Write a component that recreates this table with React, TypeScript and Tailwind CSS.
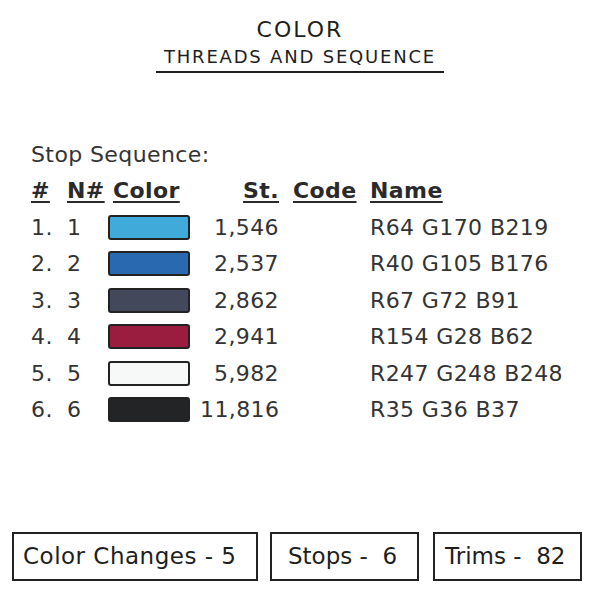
const threads = [
  { n: 1, color: 'bg-[rgb(64,170,219)]', st: '1,546', name: 'R64 G170 B219' },
  { n: 2, color: 'bg-[rgb(40,105,176)]', st: '2,537', name: 'R40 G105 B176' },
  { n: 3, color: 'bg-[rgb(67,72,91)]', st: '2,862', name: 'R67 G72 B91' },
  { n: 4, color: 'bg-[rgb(154,28,62)]', st: '2,941', name: 'R154 G28 B62' },
  { n: 5, color: 'bg-[rgb(247,248,248)]', st: '5,982', name: 'R247 G248 B248' },
  { n: 6, color: 'bg-[rgb(35,36,37)]', st: '11,816', name: 'R35 G36 B37' },
]

const row = 'grid grid-cols-[36px_41px_92px_79px_91px_1fr] items-center h-[36.5px]'

export default function App() {
  return (
    <div className="w-[600px] h-[600px] bg-white relative overflow-hidden">
      <div className="flex flex-col items-center pt-[17px] font-['DejaVu_Sans',sans-serif] text-[#1e1e1e]">
        <h1 className="text-[22px] leading-[26px] tracking-[2px]">COLOR</h1>
        <div className="mt-[3px] px-[8px] border-b-2 border-[#1e1e1e] pb-[3px]">
          <h2 className="text-[18px] leading-[22px] tracking-[1.8px]">THREADS AND SEQUENCE</h2>
        </div>
      </div>

      <div className="mt-[63px] pl-[31px] font-['DejaVu_Sans',sans-serif] text-[22px] tracking-[0.4px] text-[#333]">
        <div className="h-[36.5px] flex items-center">Stop Sequence:</div>
        <div className={`${row} font-bold underline underline-offset-[3px] decoration-[1.5px] text-[#2a2a2a]`}>
          <span>#</span>
          <span>N#</span>
          <span className="pl-[5px]">Color</span>
          <span className="text-right">St.</span>
          <span className="pl-[14px]">Code</span>
          <span>Name</span>
        </div>
        {threads.map((t) => (
          <div key={t.n} className={row}>
            <span>{t.n}.</span>
            <span>{t.n}</span>
            <span className={`w-[82px] h-[25px] border-2 border-[#222] rounded-[3px] ${t.color}`} />
            <span className="text-right">{t.st}</span>
            <span />
            <span>{t.name}</span>
          </div>
        ))}
      </div>

      <div className="absolute left-0 right-0 top-[532px] flex pl-[12px] gap-[12px] font-['DejaVu_Sans',sans-serif] text-[23px] text-[#1e1e1e]">
        <div className="w-[246px] h-[49px] border-2 border-[#222] flex items-center pl-[9px] whitespace-pre tracking-[0.5px]">Color Changes - 5</div>
        <div className="w-[149px] h-[49px] border-2 border-[#222] flex items-center pl-[16px] whitespace-pre">Stops -  6</div>
        <div className="ml-[2px] w-[149px] h-[49px] border-2 border-[#222] flex items-center pl-[10px] whitespace-pre">Trims -  82</div>
      </div>
    </div>
  )
}
